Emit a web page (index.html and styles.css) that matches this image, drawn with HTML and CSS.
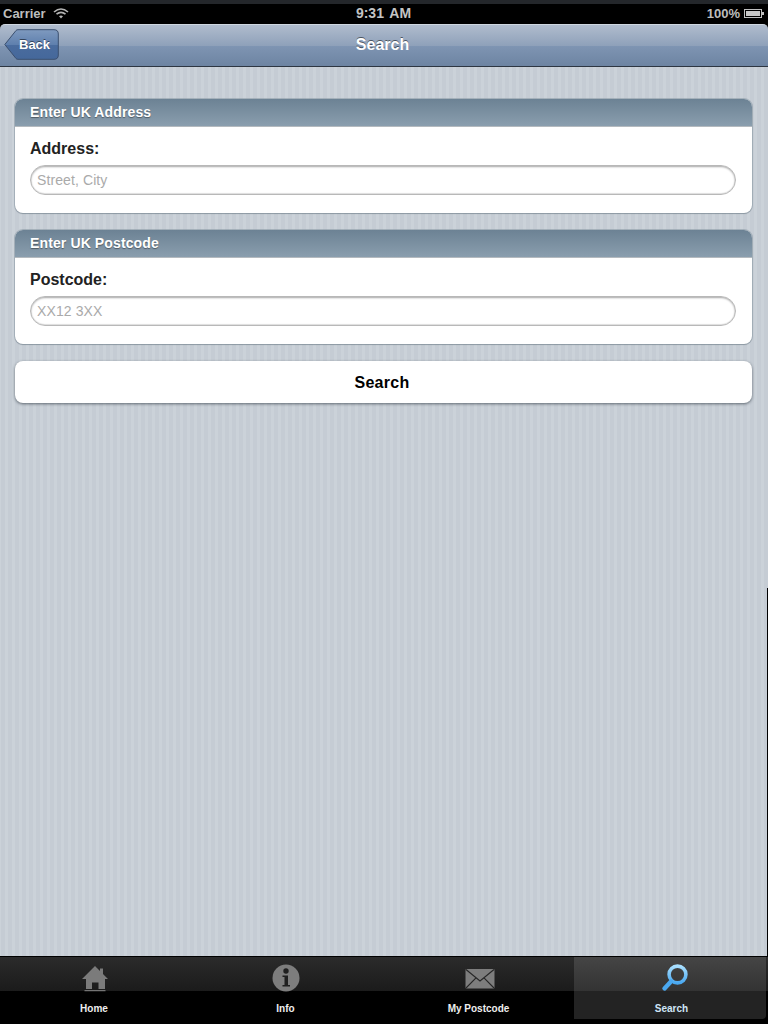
FILE: index.html
```html
<!DOCTYPE html>
<html lang="en">
<head>
    <meta charset="UTF-8">
    <meta name="viewport" content="width=device-width, initial-scale=1.0">
    <title>Search</title>
    <link rel="stylesheet" href="styles.css">
</head>

<body>
    <div id="app">
        <!--status bar-->
        <div class="status-bar">
            <div class="status-left">
                <span>Carrier</span>
                <svg class="wifi" width="16" height="11" viewBox="0 0 16 11">
                    <path d="M1 4 Q8 -2 15 4" fill="none" stroke="#b5b5b5" stroke-width="1.6"/>
                    <path d="M3.5 6.2 Q8 2.4 12.5 6.2" fill="none" stroke="#b5b5b5" stroke-width="1.6"/>
                    <path d="M6 8.2 Q8 6.6 10 8.2 L8 10.4 Z" fill="#b5b5b5"/>
                </svg>
            </div>
            <div class="status-time">9:31 AM</div>
            <div class="status-right">
                <span>100%</span>
                <div class="battery"><div class="battery-fill"></div></div>
            </div>
        </div>

        <!--nav-->
        <div class="nav-bar">
            <a class="back-btn">
                <svg class="back-shape" width="55" height="31" viewBox="0 0 55 31">
                    <defs>
                        <linearGradient id="backGrad" x1="0" y1="0" x2="0" y2="1">
                            <stop offset="0" stop-color="#7f9abf"/>
                            <stop offset="0.5" stop-color="#5f80ae"/>
                            <stop offset="0.5" stop-color="#4a6c9e"/>
                            <stop offset="1" stop-color="#45689b"/>
                        </linearGradient>
                    </defs>
                    <path d="M0.8 15.5 L12 1.5 Q12.6 0.7 14 0.7 L50 0.7 Q54.3 0.7 54.3 5 L54.3 26 Q54.3 30.3 50 30.3 L14 30.3 Q12.6 30.3 12 29.5 Z" fill="url(#backGrad)" stroke="#3b4f6e" stroke-width="1"/>
                </svg>
                <span class="back-label">Back</span>
            </a>
            <h1 class="nav-title">Search</h1>
        </div>

        <!--search form-->
        <div class="content">
            <div class="panel">
                <div class="panel-head">Enter UK Address</div>
                <div class="panel-body">
                    <label class="field-label">Address:</label>
                    <input class="field-input" type="text" placeholder="Street, City">
                </div>
            </div>
            <div class="panel">
                <div class="panel-head">Enter UK Postcode</div>
                <div class="panel-body">
                    <label class="field-label">Postcode:</label>
                    <input class="field-input" type="text" placeholder="XX12 3XX">
                </div>
            </div>
            <button class="search-btn" type="button">Search</button>
            <div class="edge-line"></div>
        </div>

        <!--tabs-->
        <div class="tab-bar">
            <div class="tab tab-home">
                <svg width="28" height="28" viewBox="0 0 28 28">
                    <path d="M14 2 L19 7 L19 4.5 L22 4.5 L22 10 L27 15 L24 15 L24 25 L17.5 25 L17.5 18.5 L11 18.5 L11 25 L5 25 L5 15 L1 15 Z" fill="#7b7b7b"/>
                    <rect x="3.5" y="26.2" width="21" height="1" fill="#8a8a8a"/>
                </svg>
                <span class="tab-label">Home</span>
            </div>
            <div class="tab">
                <svg width="28" height="28" viewBox="0 0 28 28">
                    <circle cx="14" cy="14" r="13.5" fill="#7d7d7d"/>
                    <circle cx="14" cy="7" r="2.7" fill="#1f1f1f"/>
                    <path d="M10.5 11.5 L16 11.5 L16 21 L18 21 L18 22.5 L10.5 22.5 L10.5 21 L12.5 21 L12.5 13 L10.5 13 Z" fill="#1f1f1f"/>
                </svg>
                <span class="tab-label">Info</span>
            </div>
            <div class="tab tab-mail">
                <svg width="30" height="28" viewBox="0 0 30 28">
                    <rect x="0.5" y="5" width="29" height="19.5" rx="1" fill="#7d7d7d"/>
                    <path d="M1 5.5 L15 17 L29 5.5 M1 24 L11 13.8 M29 24 L19 13.8" fill="none" stroke="#262626" stroke-width="1.1"/>
                </svg>
                <span class="tab-label">My Postcode</span>
            </div>
            <div class="tab tab-active">
                <svg width="28" height="28" viewBox="0 0 28 28">
                    <defs>
                        <linearGradient id="lensGrad" x1="0" y1="0" x2="0" y2="1">
                            <stop offset="0" stop-color="#a8dfff"/>
                            <stop offset="1" stop-color="#4aa8f0"/>
                        </linearGradient>
                    </defs>
                    <circle cx="16.5" cy="10.5" r="8.4" fill="none" stroke="url(#lensGrad)" stroke-width="3.6"/>
                    <path d="M10 17.5 L3.5 24.5" fill="none" stroke="#4aa8f0" stroke-width="4.4" stroke-linecap="round"/>
                </svg>
                <span class="tab-label">Search</span>
            </div>
        </div>
    </div>
</body>
</html>
```

FILE: styles.css
```css
* {
    box-sizing: border-box;
}
body {
    margin: 0;
    font-family: "Liberation Sans", Arial, sans-serif;
    background-color: #000;
}
#app {
    width: 768px;
    height: 1024px;
    display: flex;
    flex-direction: column;
    overflow: hidden;
    background-color: #c5ccd4;
    background-image: repeating-linear-gradient(90deg, #c5ccd4 0, #c5ccd4 4px, #cbd2d9 4px, #cbd2d9 7px);
    background-position: 1px 0;
}

/* status bar */
.status-bar {
    height: 29px;
    margin-bottom: -5px;
    flex-shrink: 0;
    display: grid;
    grid-template-columns: 1fr auto 1fr;
    align-items: center;
    padding: 2px 6px 5px 3px;
    background: linear-gradient(#24272b 0, #24272b 4px, #000 4px);
    color: #bdbdbd;
    font-size: 13px;
    font-weight: bold;
}
.status-left {
    display: flex;
    align-items: center;
    gap: 7px;
}
.status-time {
    margin-left: 2px;
    font-size: 14px;
    word-spacing: 2px;
    color: #c4c4c4;
}
.status-right {
    display: flex;
    align-items: center;
    justify-content: flex-end;
    gap: 4px;
}
.battery {
    width: 18px;
    height: 9px;
    border: 1px solid #c0c0c0;
    padding: 1px;
    position: relative;
}
.battery::after {
    content: "";
    position: absolute;
    right: -3px;
    top: 2px;
    width: 2px;
    height: 3px;
    background-color: #c0c0c0;
}
.battery-fill {
    height: 100%;
    background-color: #c8c8c8;
}

/* nav */
.nav-bar {
    height: 43px;
    flex-shrink: 0;
    position: relative;
    display: flex;
    align-items: center;
    justify-content: center;
    padding: 0 3px 2px 0;
    border-radius: 5px 5px 0 0;
    border-top: 1px solid #cfd7e0;
    border-bottom: 1px solid #2d3642;
    background: linear-gradient(#b0bccd 0, #8fa1ba 50%, #7f95b3 50%, #6d84a2 100%);
}
.nav-title {
    margin: 0;
    font-size: 16px;
    color: #fff;
    text-shadow: 0 -1px 0 rgba(0, 0, 0, 0.5);
}
.back-btn {
    position: absolute;
    left: 4px;
    top: 4px;
    width: 55px;
    height: 31px;
}
.back-shape {
    display: block;
}
.back-label {
    position: absolute;
    left: 15px;
    top: 8px;
    font-size: 13px;
    font-weight: bold;
    color: #fff;
    text-shadow: 0 -1px 0 rgba(0, 0, 0, 0.5);
}

/* form */
.content {
    flex: 1;
    position: relative;
    display: flex;
    flex-direction: column;
    gap: 17px;
    padding: 32px 16px 0 15px;
}
.edge-line {
    position: absolute;
    right: 0;
    top: 521px;
    bottom: 0;
    width: 1px;
    background-color: #000;
}
.panel {
    height: 114px;
    border-radius: 8px;
    overflow: hidden;
    background-color: #fff;
    box-shadow: 0 0 0 1px rgba(130, 145, 158, 0.5), 0 1px 1px rgba(90, 100, 110, 0.4);
}
.panel-head {
    height: 28px;
    padding: 5px 15px 0;
    font-size: 14px;
    font-weight: bold;
    letter-spacing: 0.12px;
    color: #fff;
    text-shadow: 0 1px 1px rgba(0, 0, 0, 0.4);
    border-bottom: 1px solid #b4babf;
    background: linear-gradient(#6c8294, #8a9eae);
}
.panel-body {
    padding: 13px 15px 0;
}
.field-label {
    display: block;
    font-size: 16px;
    font-weight: bold;
    color: #222;
}
.field-input {
    display: block;
    width: 706px;
    height: 30px;
    margin-top: 7px;
    padding: 0 6px;
    border: 1px solid #b8b8b8;
    border-radius: 15px;
    background-color: #fff;
    box-shadow: inset 0 1px 2px rgba(0, 0, 0, 0.35), inset 0 -1px 1px rgba(0, 0, 0, 0.12);
    font-family: inherit;
    font-size: 14px;
    letter-spacing: 0.1px;
}
.field-input::placeholder {
    color: #aaa;
    opacity: 1;
}
.search-btn {
    height: 42px;
    padding: 2px 3px 0 0;
    border: none;
    border-radius: 8px;
    background-color: #fff;
    box-shadow: 0 1px 3px rgba(40, 50, 60, 0.65);
    font-family: inherit;
    font-size: 16px;
    font-weight: bold;
    letter-spacing: 0.3px;
    color: #000;
}

/* tabs */
.tab-bar {
    height: 68px;
    flex-shrink: 0;
    display: grid;
    grid-template-columns: 188px 195px 191px 192px;
    grid-template-rows: 62px;
    background: linear-gradient(#2b2b2b 0, #1b1b1b 34px, #000 34px);
    border-top: 1px solid #000;
}
.tab {
    display: flex;
    flex-direction: column;
    align-items: center;
    padding-top: 7px;
}
.tab-label {
    margin-top: 11px;
    font-size: 10px;
    font-weight: bold;
    color: #eee;
}
.tab-home svg {
    margin-left: 2px;
}
.tab-mail svg {
    margin-left: 3px;
}
.tab-active {
    padding-left: 3px;
    border-radius: 0 0 4px 0;
    background: linear-gradient(#454545 0, #333 34px, #232323 34px);
}
.tab-active svg {
    margin-left: 7px;
}
.tab-active .tab-label {
    color: #cfe6f7;
}
```
